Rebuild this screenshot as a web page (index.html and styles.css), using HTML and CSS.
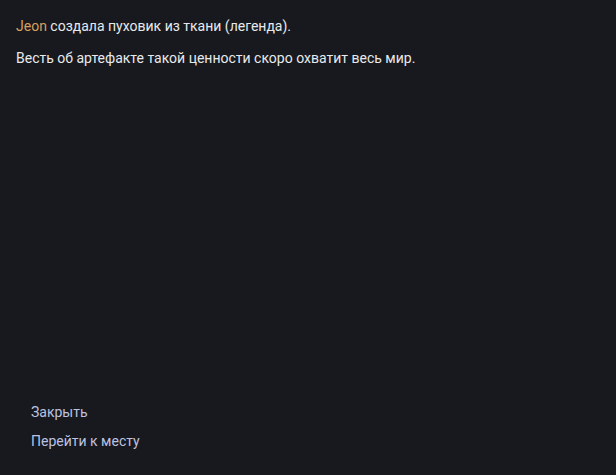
FILE: index.html
```html
<!DOCTYPE html>
<html lang="ru">
<head>
<meta charset="UTF-8">
<title>Артефакт</title>
<link rel="stylesheet" href="styles.css">
</head>
<body>
<div class="popup">
  <div class="message">
    <p class="line"><span class="name">Jeon</span> создала пуховик из ткани (легенда).</p>
    <p class="line">Весть об артефакте такой ценности скоро охватит весь мир.</p>
  </div>
  <div class="actions">
    <button class="action">Закрыть</button>
    <button class="action">Перейти к месту</button>
  </div>
</div>
</body>
</html>
```

FILE: styles.css
```css
html,body{margin:0;height:100%;}
body{background:#17191e;font-family:Roboto,"Noto Sans",sans-serif;font-size:14px;color:#e8e9ec;}
.popup{height:100%;display:flex;flex-direction:column;justify-content:space-between;box-sizing:border-box;padding:18px 16px 26px;}
.message{display:flex;flex-direction:column;gap:16px;}
.line{margin:0;line-height:16px;}
.name{color:#d9a05f;}
.actions{display:flex;flex-direction:column;align-items:flex-start;gap:13px;padding-left:15px;}
.action{background:none;border:none;padding:0;font:inherit;line-height:16px;color:#bcc2e0;cursor:pointer;}
```
